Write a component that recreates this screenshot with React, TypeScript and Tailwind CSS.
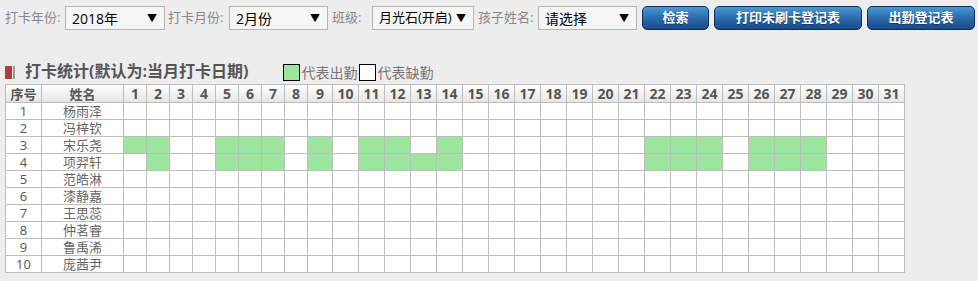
import React from "react";

const FONT = { fontFamily: '"Open Sans", "Noto Sans CJK SC", sans-serif' };

const STUDENTS = ["杨雨泽", "冯梓钦", "宋乐尧", "项羿轩", "范皓淋", "漆静嘉", "王思蕊", "仲茗睿", "鲁禹浠", "庞茜尹"];

// attended days per row index
const PRESENT: Record<number, number[]> = {
	2: [1, 2, 5, 6, 7, 9, 11, 12, 14, 22, 23, 24, 26, 27, 28],
	3: [2, 5, 6, 7, 9, 11, 12, 13, 14, 22, 23, 24, 26, 27, 28],
};

const DAYS = Array.from({ length: 31 }, (_, i) => i + 1);

function colWidth(d: number) {
	if (d <= 8) return "w-[23px]";
	if (d === 9) return "w-[25px]";
	return "w-[26px]";
}

function FakeSelect({ value, width, tight }: { value: string; width: string; tight?: boolean }) {
	return (
		<div
			className={`${width} h-[24px] shrink-0 flex items-center justify-between whitespace-nowrap border border-[#b4b4b4] bg-[#f6f6f6] pl-[6px] pr-[7px] text-[14px] text-black`}
		>
			<span className={tight ? "text-[13px]" : ""}>{value}</span>
			<span className="text-[10px] leading-none">▼</span>
		</div>
	);
}

function BlueButton({ label, width }: { label: string; width: string }) {
	return (
		<button
			className={`${width} h-[24px] rounded-[5px] border border-[#0c2d5e] bg-gradient-to-b from-[#4a9ad4] via-[#2a6bad] to-[#1a4a88] text-[13px] font-bold text-white [text-shadow:0_1px_1px_rgba(0,0,0,0.4)]`}
		>
			{label}
		</button>
	);
}

export default function App() {
	return (
		<div className="w-[978px] h-[281px] bg-[#ededed] overflow-hidden" style={FONT}>
			<div className="flex items-center pt-[6px] pl-[5px] text-[13px] text-[#888] whitespace-nowrap">
				<span className="w-[60px] shrink-0">打卡年份:</span>
				<FakeSelect value="2018年" width="w-[100px]" />
				<span className="w-[61px] ml-[3px] shrink-0">打卡月份:</span>
				<FakeSelect value="2月份" width="w-[99px]" />
				<span className="w-[40px] ml-[4px] shrink-0">班级:</span>
				<FakeSelect value="月光石(开启)" width="w-[102px]" tight />
				<span className="w-[60px] ml-[4px] shrink-0">孩子姓名:</span>
				<FakeSelect value="请选择" width="w-[99px]" />
				<div className="flex gap-[5px] ml-[5px] -mt-[1px]">
					<BlueButton label="检索" width="w-[67px]" />
					<BlueButton label="打印未刷卡登记表" width="w-[148px]" />
					<BlueButton label="出勤登记表" width="w-[108px]" />
				</div>
			</div>

			<div className="flex items-end mt-[31px] pl-[5px] h-[20px]">
				<div className="flex items-center gap-[1px] mb-[2px]">
					<span className="w-[7px] h-[13px] bg-[#b83a3a]" />
					<span className="w-[2px] h-[13px] bg-[#9a9a9a]" />
				</div>
				<span className="ml-[10px] text-[16px] font-bold text-[#555] leading-[20px]">
					打卡统计(默认为:当月打卡日期)
				</span>
				<div className="flex items-center ml-[35px] text-[14px] text-[#777] leading-[17px]">
					<span className="w-[17px] h-[17px] border border-black bg-[#9de69d]" />
					<span className="ml-[1px]">代表出勤</span>
					<span className="w-[17px] h-[17px] border border-black bg-white ml-[2px]" />
					<span className="ml-[1px]">代表缺勤</span>
				</div>
			</div>

			<table className="mt-[3px] ml-[5px] table-fixed border-collapse text-[#555] text-center">
				<colgroup>
					<col className="w-[36px]" />
					<col className="w-[82px]" />
					{DAYS.map((d) => (
						<col key={d} className={colWidth(d)} />
					))}
				</colgroup>
				<thead>
					<tr className="h-[18px] bg-gradient-to-b from-white to-[#e4e4e4] text-[13px] font-bold">
						<th className="border border-[#bdbdbd] p-0 leading-[16px]">序号</th>
						<th className="border border-[#bdbdbd] p-0 leading-[16px]">姓名</th>
						{DAYS.map((d) => (
							<th key={d} className="border border-[#bdbdbd] p-0 leading-[16px] text-[14px]">
								{d}
							</th>
						))}
					</tr>
				</thead>
				<tbody className="bg-white text-[13px]">
					{STUDENTS.map((name, i) => (
						<tr key={name} className="h-[17px]">
							<td className="border border-[#bdbdbd] p-0 leading-[15px]">{i + 1}</td>
							<td className="border border-[#bdbdbd] p-0 leading-[15px] text-[#666]">{name}</td>
							{DAYS.map((d) => (
								<td
									key={d}
									className={`border border-[#bdbdbd] p-0 ${PRESENT[i]?.includes(d) ? "bg-[#9de69d]" : ""}`}
								/>
							))}
						</tr>
					))}
				</tbody>
			</table>
		</div>
	);
}
